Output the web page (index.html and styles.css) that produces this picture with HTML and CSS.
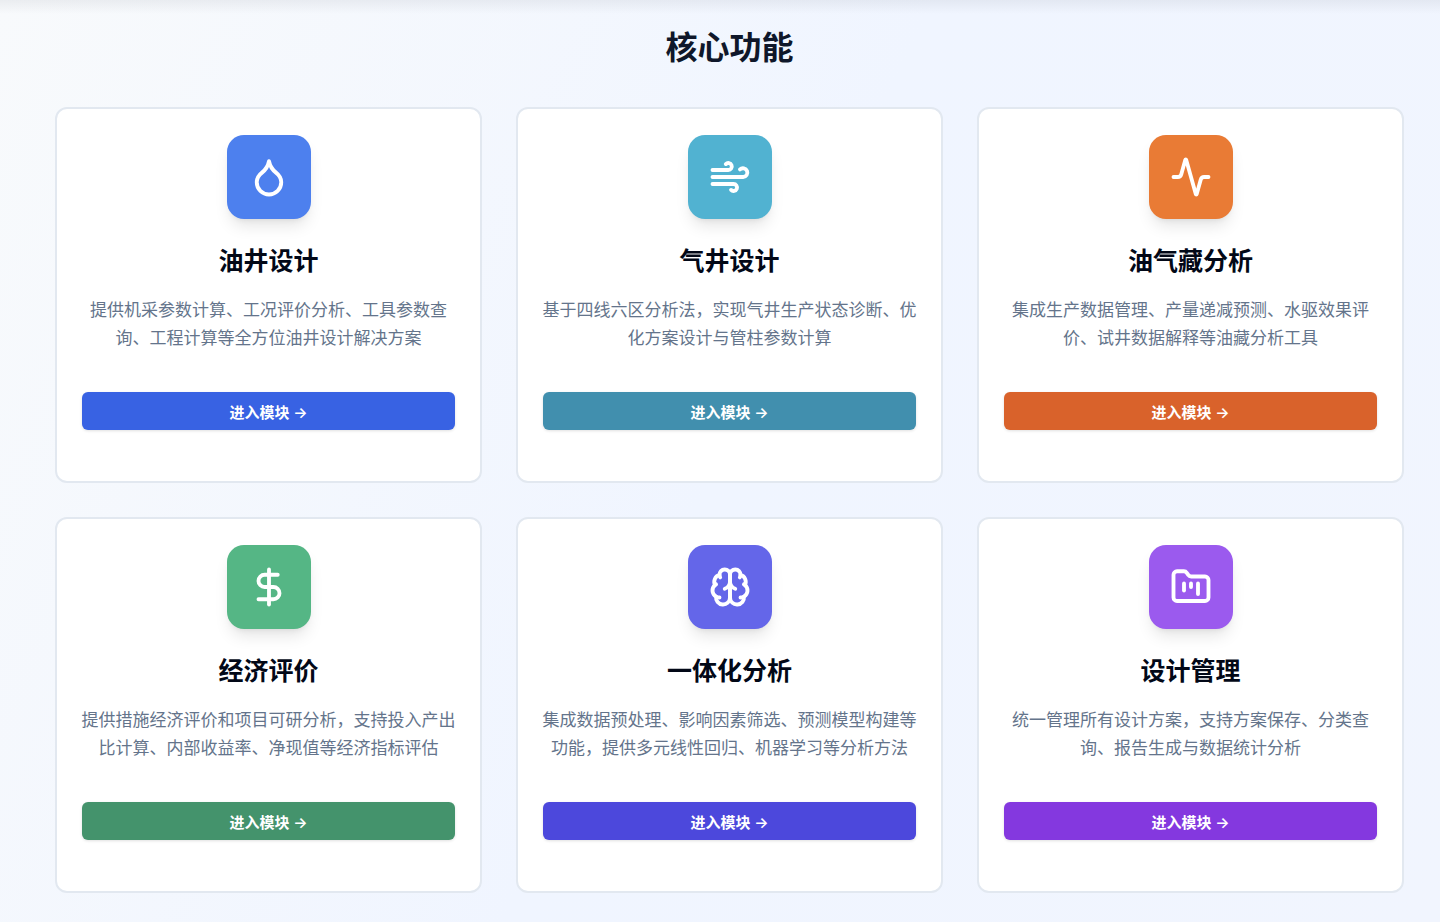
FILE: index.html
```
<!DOCTYPE html>
<html lang="zh-CN">
<head>
    <meta charset="UTF-8">
    <meta name="viewport" content="width=device-width, initial-scale=1.0">
    <title>核心功能</title>
    <link rel="stylesheet" href="styles.css">
</head>
<body>
    <main class="features">
        <h2 class="features-title">核心功能</h2>

        <div class="card-grid">
            <!-- 油井设计 -->
            <article class="card oil">
                <div class="card-icon">
                    <svg viewBox="0 0 24 24" aria-hidden="true">
                        <path d="M12 22a7 7 0 0 0 7-7c0-2-1-3.9-3-5.5s-3.5-4-4-6.5c-.5 2.5-2 4.9-4 6.5C6 11.1 5 13 5 15a7 7 0 0 0 7 7z"/>
                    </svg>
                </div>
                <h3>油井设计</h3>
                <p>提供机采参数计算、工况评价分析、工具参数查询、工程计算等全方位油井设计解决方案</p>
                <button type="button">进入模块 →</button>
            </article>

            <!-- 气井设计 -->
            <article class="card gas">
                <div class="card-icon">
                    <svg viewBox="0 0 24 24" aria-hidden="true">
                        <path d="M17.7 7.7a2.5 2.5 0 1 1 1.8 4.3H2"/>
                        <path d="M9.6 4.6A2 2 0 1 1 11 8H2"/>
                        <path d="M12.6 19.4A2 2 0 1 0 14 16H2"/>
                    </svg>
                </div>
                <h3>气井设计</h3>
                <p>基于四线六区分析法，实现气井生产状态诊断、优化方案设计与管柱参数计算</p>
                <button type="button">进入模块 →</button>
            </article>

            <!-- 油气藏分析 -->
            <article class="card reservoir">
                <div class="card-icon">
                    <svg viewBox="0 0 24 24" aria-hidden="true">
                        <path d="M22 12h-2.48a2 2 0 0 0-1.93 1.46l-2.35 8.36a.25.25 0 0 1-.48 0L9.24 2.18a.25.25 0 0 0-.48 0l-2.35 8.36A2 2 0 0 1 4.49 12H2"/>
                    </svg>
                </div>
                <h3>油气藏分析</h3>
                <p>集成生产数据管理、产量递减预测、水驱效果评价、试井数据解释等油藏分析工具</p>
                <button type="button">进入模块 →</button>
            </article>

            <!-- 经济评价 -->
            <article class="card economy">
                <div class="card-icon">
                    <svg viewBox="0 0 24 24" aria-hidden="true">
                        <path d="M12 2v20"/>
                        <path d="M17 5H9.5a3.5 3.5 0 0 0 0 7h5a3.5 3.5 0 0 1 0 7H6"/>
                    </svg>
                </div>
                <h3>经济评价</h3>
                <p>提供措施经济评价和项目可研分析，支持投入产出比计算、内部收益率、净现值等经济指标评估</p>
                <button type="button">进入模块 →</button>
            </article>

            <!-- 一体化分析 -->
            <article class="card integrated">
                <div class="card-icon">
                    <svg viewBox="0 0 24 24" aria-hidden="true">
                        <path d="M12 5a3 3 0 1 0-5.997.125 4 4 0 0 0-2.526 5.77 4 4 0 0 0 .556 6.588A4 4 0 1 0 12 18Z"/>
                        <path d="M12 5a3 3 0 1 1 5.997.125 4 4 0 0 1 2.526 5.77 4 4 0 0 1-.556 6.588A4 4 0 1 1 12 18Z"/>
                        <path d="M15 13a4.5 4.5 0 0 1-3-4 4.5 4.5 0 0 1-3 4"/>
                        <path d="M17.599 6.5a3 3 0 0 0 .399-1.375"/>
                        <path d="M6.003 5.125A3 3 0 0 0 6.401 6.5"/>
                        <path d="M3.477 10.896a4 4 0 0 1 .585-.396"/>
                        <path d="M19.938 10.5a4 4 0 0 1 .585.396"/>
                        <path d="M6 18a4 4 0 0 1-1.967-.516"/>
                        <path d="M19.967 17.484A4 4 0 0 1 18 18"/>
                    </svg>
                </div>
                <h3>一体化分析</h3>
                <p>集成数据预处理、影响因素筛选、预测模型构建等功能，提供多元线性回归、机器学习等分析方法</p>
                <button type="button">进入模块 →</button>
            </article>

            <!-- 设计管理 -->
            <article class="card manage">
                <div class="card-icon">
                    <svg viewBox="0 0 24 24" aria-hidden="true">
                        <path d="M4 20h16a2 2 0 0 0 2-2V8a2 2 0 0 0-2-2h-7.93a2 2 0 0 1-1.66-.9l-.82-1.2A2 2 0 0 0 7.93 3H4a2 2 0 0 0-2 2v13c0 1.1.9 2 2 2Z"/>
                        <path d="M8 10v4"/>
                        <path d="M12 10v2"/>
                        <path d="M16 10v6"/>
                    </svg>
                </div>
                <h3>设计管理</h3>
                <p>统一管理所有设计方案，支持方案保存、分类查询、报告生成与数据统计分析</p>
                <button type="button">进入模块 →</button>
            </article>
        </div>
    </main>
</body>
</html>
```
FILE: styles.css
```
* {
    box-sizing: border-box;
}

body {
    margin: 0;
    min-height: 100vh;
    background:
        linear-gradient(to bottom, rgba(15, 23, 42, 0.06), rgba(15, 23, 42, 0) 14px),
        linear-gradient(115deg, #f8fafc 0%, #f0f5ff 50%, #f1f5fe 100%);
    font-family: Inter, "Noto Sans CJK SC", sans-serif;
    color: #020817;
}

.features {
    padding: 24px 36px 30px 55px;
}

.features-title {
    margin: 0 0 36px;
    font-size: 32px;
    line-height: 47px;
    font-weight: 700;
    text-align: center;
    color: #0f172a;
}

.card-grid {
    display: grid;
    grid-template-columns: repeat(3, 1fr);
    gap: 34px;
}

.card {
    padding: 26px 25px 51px;
    background: #fff;
    border: 2px solid #e2e8f0;
    border-radius: 12px;
    text-align: center;
}

.card-icon {
    display: flex;
    align-items: center;
    justify-content: center;
    width: 84px;
    height: 84px;
    margin: 0 auto;
    border-radius: 17px;
    box-shadow:
        0 10px 16px -3px rgba(0, 0, 0, 0.1),
        0 4px 6px -4px rgba(0, 0, 0, 0.1);
}

.card-icon svg {
    width: 42px;
    height: 42px;
    fill: none;
    stroke: #fff;
    stroke-width: 2.2;
    stroke-linecap: round;
    stroke-linejoin: round;
}

.card h3 {
    margin: 25px 0 18px;
    font-size: 25px;
    line-height: 34px;
    font-weight: 700;
}

.card p {
    margin: 0 -2px 40px;
    font-size: 17px;
    line-height: 28px;
    color: #64748b;
}

.card button {
    display: block;
    width: 100%;
    height: 38px;
    padding: 0;
    border: none;
    border-radius: 6px;
    box-shadow: 0 1px 3px rgba(0, 0, 0, 0.12);
    font-family: inherit;
    font-size: 15px;
    font-weight: 600;
    color: #fff;
    cursor: pointer;
}

/* Module colours */
.oil .card-icon { background: #4d80ee; }
.oil button { background: #3862e3; }

.gas .card-icon { background: #51b2d1; }
.gas button { background: #418fae; }

.reservoir .card-icon { background: #e97b35; }
.reservoir button { background: #d9622b; }

.economy .card-icon { background: #55b685; }
.economy button { background: #44936c; }

.integrated .card-icon { background: #6466e9; }
.integrated button { background: #4c48dc; }

.manage .card-icon { background: #9b5aee; }
.manage button { background: #8438df; }

@media (max-width: 1200px) {
    .card-grid { grid-template-columns: repeat(2, 1fr); }
}

@media (max-width: 720px) {
    .card-grid { grid-template-columns: 1fr; }
}
```
